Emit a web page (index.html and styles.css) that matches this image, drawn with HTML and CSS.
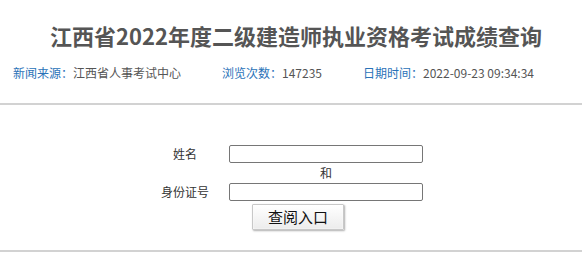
FILE: index.html
```html
<!DOCTYPE html>
<html lang="zh-CN">
<head>
<meta charset="utf-8">
<title>成绩查询</title>
<link rel="stylesheet" href="styles.css">
</head>
<body>
<div class="page">
  <h1 class="title">江西省2022年度二级建造师执业资格考试成绩查询</h1>
  <div class="meta">
    <span class="meta-item"><span class="lbl">新闻来源：</span>江西省人事考试中心</span>
    <span class="meta-item"><span class="lbl">浏览次数：</span>147235</span>
    <span class="meta-item"><span class="lbl">日期时间：</span>2022-09-23 09:34:34</span>
  </div>
  <hr class="rule">
  <form class="form">
    <label class="field-label">姓名</label>
    <input class="field" type="text">
    <span class="and">和</span>
    <label class="field-label">身份证号</label>
    <input class="field" type="text">
    <div class="actions"><button type="button" class="btn">查阅入口</button></div>
  </form>
  <hr class="rule rule-bottom">
</div>
</body>
</html>
```

FILE: styles.css
```css
* { box-sizing: border-box; }
html, body { margin: 0; padding: 0; background: #fff; }
body { font-family: "Noto Sans CJK SC", "Noto Sans", sans-serif; color: #555; }
.page { width: 582px; padding-top: 17px; }
.title {
  margin: 0;
  font-size: 22px;
  line-height: 36px;
  font-weight: 700;
  color: #555;
  text-align: center;
  padding-left: 10px;
}
.meta {
  display: flex;
  gap: 41px;
  margin-top: 10px;
  padding-left: 13px;
  font-size: 12px;
  line-height: 20px;
  color: #555;
}
.lbl { color: #2a72b8; }
.rule {
  margin: 20px 0 0 0;
  border: 0;
  border-top: 2px solid #d2d2d2;
  height: 0;
}
.form {
  display: grid;
  grid-template-columns: 70px 194px;
  grid-template-rows: 18px 20px 18px auto;
  column-gap: 9px;
  margin: 40px 0 0 150px;
  font-size: 12px;
  color: #333;
}
.field-label { text-align: center; line-height: 18px; }
.field {
  width: 194px;
  height: 18px;
  border: 1px solid #767676;
  border-radius: 2px;
  padding: 0 2px;
  font-size: 12px;
  margin: 0;
}
.and { grid-column: 2; text-align: center; line-height: 20px; color: #333; }
.actions { grid-column: 1 / 3; padding: 3px 0 0 102px; }
.btn {
  width: 92px;
  height: 26px;
  font-family: "Noto Sans CJK SC", sans-serif;
  font-size: 15px;
  line-height: 22px;
  color: #111;
  background: linear-gradient(#ffffff, #ececec);
  border: 1px solid #c8c8c8;
  box-shadow: 1px 1px 2px #b0b0b0, inset 0 0 2px #fff;
  padding: 0;
  border-radius: 1px;
}
.rule-bottom { margin-top: 20px; }
```
